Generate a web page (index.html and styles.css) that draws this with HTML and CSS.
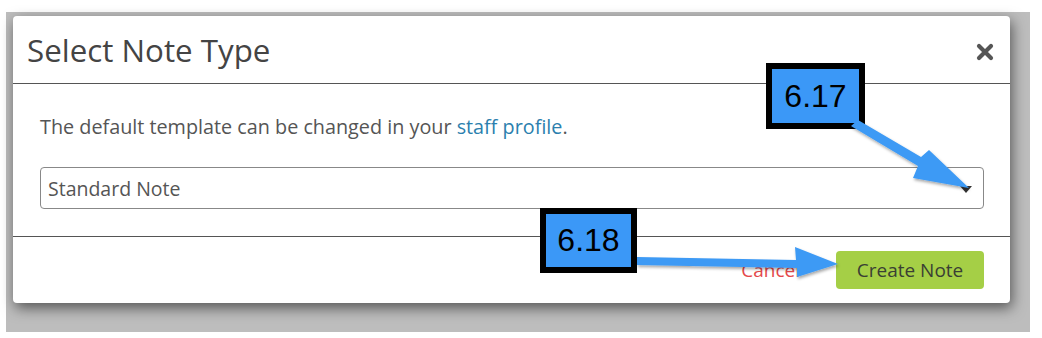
FILE: index.html
```html
<!DOCTYPE html>
<html lang="en">
<head>
  <meta charset="UTF-8">
  <meta name="viewport" content="width=device-width, initial-scale=1.0">
  <title>Select Note Type</title>
  <link rel="stylesheet" href="styles.css">
</head>
<body>
  <div class="backdrop">
    <div class="modal">
      <div class="modal-header">
        <h2 class="modal-title">Select Note Type</h2>
        <button class="close" type="button" aria-label="Close">
          <svg width="18" height="18" viewBox="0 0 18 18">
            <path d="M3 3 L15 15 M15 3 L3 15" stroke="#555" stroke-width="4.2" stroke-linecap="round"/>
          </svg>
        </button>
      </div>
      <div class="modal-body">
        <p class="hint">The default template can be changed in your <a href="#">staff profile</a>.</p>
        <div class="select">
          <span>Standard Note</span>
          <span class="caret"></span>
        </div>
      </div>
      <div class="modal-footer">
        <a class="cancel" href="#">Cancel</a>
        <button class="btn-create" type="button">Create Note</button>
      </div>
    </div>
  </div>

  <!-- screenshot callouts -->
  <div class="callout callout-617">6.17</div>
  <div class="callout callout-618">6.18</div>
  <svg class="arrows" width="1042" height="338" viewBox="0 0 1042 338">
    <defs>
      <filter id="arrow-shadow" x="-10%" y="-10%" width="120%" height="130%">
        <feDropShadow dx="1" dy="2" stdDeviation="1.5" flood-color="#000" flood-opacity="0.35"/>
      </filter>
    </defs>
    <g fill="#3d9af5" filter="url(#arrow-shadow)">
      <path d="M851 126 L858 120 L921 157 L929 150 L969 188 L913 178 L918 166 Z"/>
      <path d="M637 257 L637 265 L797 268 L797 277 L838 264 L795 247 L796 260 Z"/>
    </g>
  </svg>
</body>
</html>
```

FILE: styles.css
```css
body {
  margin: 0;
  background: #fff;
  font-family: "Open Sans", "Noto Sans", sans-serif;
  position: relative;
  width: 1042px;
  height: 338px;
  overflow: hidden;
}
.backdrop {
  margin: 12px 0 0 6px;
  width: 1024px;
  height: 320px;
  background: #bdbdbd;
  padding: 4px 0 0 7px;
  box-sizing: border-box;
}
.modal {
  width: 997px;
  height: 287px;
  background: #fff;
  border-radius: 4px;
  box-shadow: 2px 5px 14px rgba(0, 0, 0, 0.55);
  display: flex;
  flex-direction: column;
}
.modal-header {
  height: 67px;
  border-bottom: 1px solid #555;
  display: flex;
  align-items: center;
  justify-content: space-between;
  padding: 0 16px 0 14px;
}
.modal-title {
  margin: 0;
  font-size: 31.3px;
  line-height: 40px;
  font-weight: normal;
  color: #444;
}
.close {
  border: 0;
  background: none;
  padding: 0;
  width: 18px;
  height: 18px;
  margin-top: 4px;
}
.modal-body {
  padding: 30px 26px 27px 27px;
  border-bottom: 1px solid #555;
}
.hint {
  margin: 0 0 27px;
  font-size: 19.8px;
  line-height: 26px;
  color: #555;
}
.hint a {
  color: #2b7fae;
  text-decoration: none;
}
.select {
  height: 42px;
  box-sizing: border-box;
  border: 1px solid #888;
  border-radius: 4px;
  display: flex;
  align-items: center;
  justify-content: space-between;
  padding: 0 11px 0 7px;
  font-size: 19.5px;
  color: #555;
}
.caret {
  width: 0;
  height: 0;
  margin-top: 2px;
  border-left: 6px solid transparent;
  border-right: 6px solid transparent;
  border-top: 7px solid #333;
}
.modal-footer {
  flex: 1;
  display: flex;
  align-items: center;
  justify-content: flex-end;
  padding: 0 26px;
  gap: 36px;
}
.cancel {
  color: #e5484a;
  font-size: 19px;
  text-decoration: none;
}
.btn-create {
  width: 148px;
  height: 38px;
  border: 0;
  border-radius: 4px;
  background: #a5cf46;
  color: #3a3f34;
  font-family: "Open Sans", "Noto Sans", sans-serif;
  font-size: 19px;
}
.callout {
  position: absolute;
  box-sizing: border-box;
  border: 6px solid #000;
  background: #3b98f7;
  color: #000;
  font-family: "Liberation Sans", Arial, sans-serif;
  font-size: 32px;
  display: flex;
  align-items: center;
  justify-content: center;
}
.callout-617 {
  left: 766px;
  top: 63px;
  width: 99px;
  height: 66px;
}
.callout-618 {
  left: 540px;
  top: 208px;
  width: 97px;
  height: 65px;
}
.arrows {
  position: absolute;
  left: 0;
  top: 0;
  pointer-events: none;
}
```
